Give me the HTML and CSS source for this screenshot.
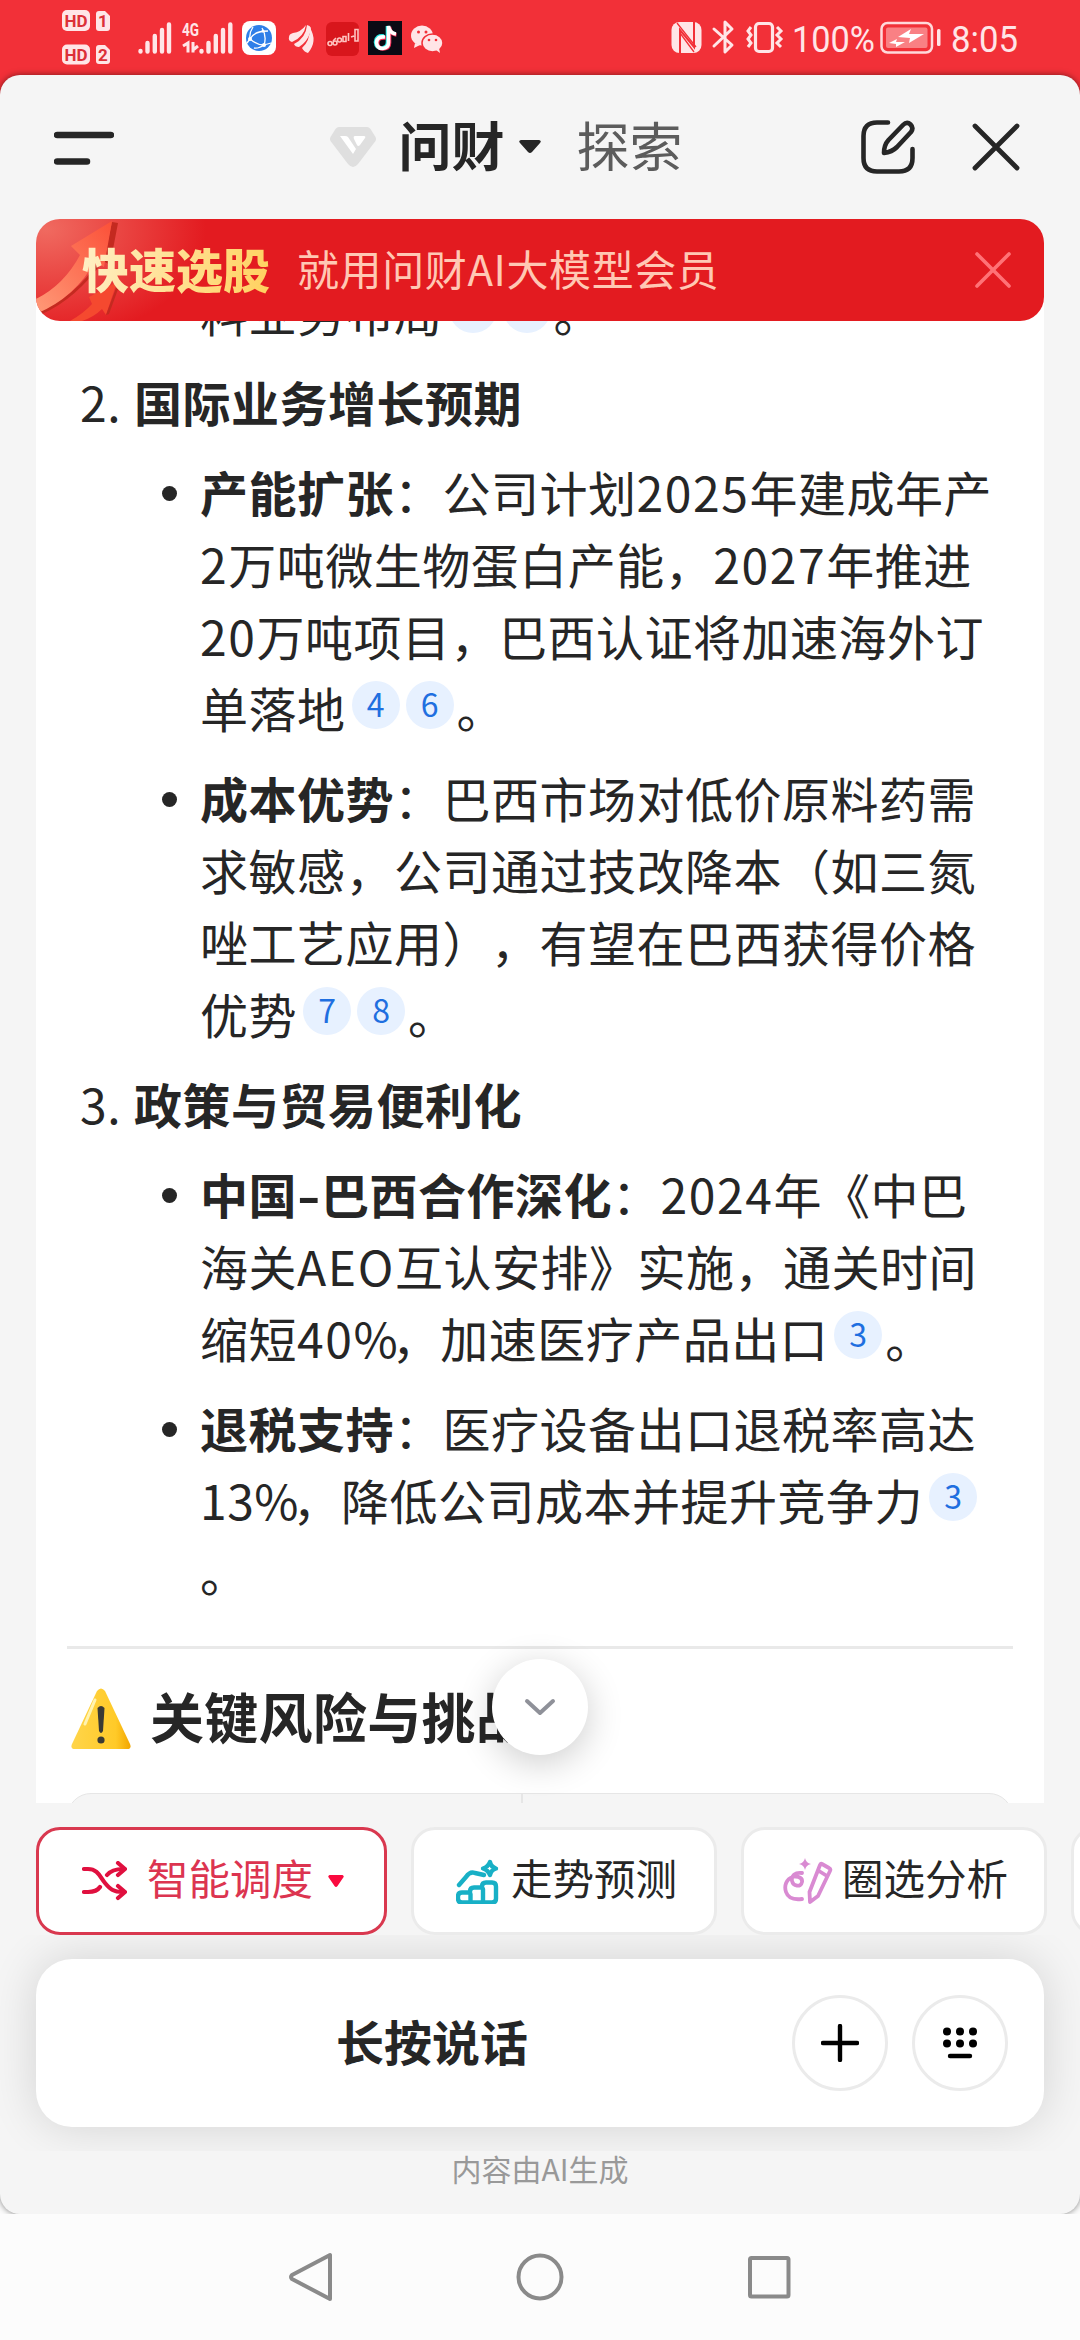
FILE: index.html
```
<!DOCTYPE html>
<html lang="zh-CN">
<head>
  <meta charset="UTF-8">
  <meta name="viewport" content="width=device-width, initial-scale=1.0">
  <title>问财</title>
  <link rel="stylesheet" href="styles.css">
</head>
<body>
  <div class="status-bar">
    <svg class="status-left" width="460" height="75" viewBox="0 0 460 75">
      <!-- HD 1 / HD 2 -->
      <g fill="#ffe5e7">
        <rect x="62" y="10" width="28" height="21" rx="5"/>
        <path d="M99 11h6l5 5v12q0 3-3 3h-8q-3 0-3-3V14q0-3 3-3z"/>
        <rect x="62" y="44.500" width="28" height="20" rx="5"/>
        <path d="M99 45h6l5 5v11q0 3-3 3h-8q-3 0-3-3V48q0-3 3-3z"/>
      </g>
      <g class="hd-text">
        <text x="76" y="27">HD</text><text x="103" y="27">1</text>
        <text x="76" y="61">HD</text><text x="103" y="61">2</text>
      </g>
      <!-- signal -->
      <g stroke="#ffe5e7" stroke-width="4.400" stroke-linecap="round">
        <path d="M140.500 51v.5M147.500 43v8.500M154.800 36v15.500M162 30v21.500M169 24.500v27"/>
        <path d="M201.500 51v.5M208.500 43v8.500M215.800 36v15.500M223 30v21.500M230.300 24.500v27"/>
      </g>
      <text class="net-text" x="182" y="36" textLength="17" lengthAdjust="spacingAndGlyphs">4G</text>
      <path d="M183 46l5-3v9.500M193 42v10.500M193 50l5-4" fill="none" stroke="#ffe5e7" stroke-width="3"/>
      <!-- browser -->
      <rect x="242" y="21" width="34" height="34" rx="8" fill="#fff"/>
      <circle cx="259" cy="38" r="13" fill="#2f7fe8"/>
      <path d="M253 27Q249 33 250 39Q257 45 264 45Q267 36 262 28M250 39Q254 31 268 31M250 39l-3 4M264 45l7-2M264 45q-6 4-10 3" fill="none" stroke="#fff" stroke-width="1.300"/>
      <circle cx="250" cy="39" r="2" fill="#fff"/><circle cx="264" cy="45" r="2" fill="#fff"/><circle cx="263" cy="31" r="1.500" fill="#fff"/>
      <!-- wing -->
      <g fill="#ffe5e7">
        <path d="M289 37q0-3 4-4 8-1 13-8-2 12-14 17-4-1-3-5z"/>
        <path d="M294 44q12-6 13-19 6 1 3 8-3 9-11 14-4 0-5-3z"/>
        <path d="M302 48q8-7 8-20 8 13-2 25-4-1-6-5z"/>
      </g>
      <!-- stock -->
      <rect x="326" y="22" width="33" height="34" rx="6" fill="#d8161c"/>
      <g fill="none" stroke="#ffc4c0" stroke-width="1.600">
        <circle cx="330" cy="43.500" r="2"/><circle cx="335" cy="43" r="2"/><circle cx="339.500" cy="40" r="2"/><path d="M343 36.500h3v5h-3zM348.500 33v8M351 37l3-1M355 29.500h3V41h-3zM333 41l3-3"/>
      </g>
      <!-- tiktok -->
      <rect x="368" y="21" width="34" height="34" fill="#0a0a14"/>
      <g fill="none" stroke-width="3.600">
        <path d="M384 36q-8-1-8.500 6 .5 6 6 6 6-.5 6-6V26q1 7 8 8" stroke="#25e8e4"/>
        <path d="M386 38q-8-1-8.500 5 .5 6 6 6 6-.5 6-6V27q1 7 7 8" stroke="#f5315a"/>
        <path d="M385 37q-8-1-8.500 5.500 .5 6 6 6 6-.5 6-6V26q1 7 7.500 8" stroke="#fff"/>
      </g>
      <!-- wechat -->
      <g fill="#ffe5e7">
        <ellipse cx="422" cy="35.500" rx="11" ry="10"/><path d="M415 43l-1 5 6-3z"/>
        <ellipse cx="432.500" cy="43" rx="10.500" ry="9" stroke="#f23038" stroke-width="1.500"/><path d="M436 50l4 3-1-5z"/>
      </g>
      <g fill="#f23038"><circle cx="418.500" cy="32" r="1.500"/><circle cx="426" cy="32" r="1.500"/><circle cx="429" cy="40" r="1.300"/><circle cx="436" cy="40" r="1.300"/></g>
    </svg>
    <svg class="status-right" width="420" height="75" viewBox="660 0 420 75">
      <!-- nfc -->
      <rect x="671.500" y="22" width="30" height="31" rx="8" fill="#ffe5e7"/>
      <path d="M680 53V30l14 17V22" fill="none" stroke="#f23038" stroke-width="2"/>
      <path d="M677 23l19 24M680 33l14 19" fill="none" stroke="#f23038" stroke-width="1.300"/>
      <!-- bluetooth -->
      <path d="M714 29l18 16-7 7V22l7 7-18 17" fill="none" stroke="#ffe5e7" stroke-width="3" stroke-linejoin="round" stroke-linecap="round"/>
      <!-- vibrate -->
      <rect x="755.500" y="23.500" width="17" height="28" rx="3.500" fill="none" stroke="#ffe5e7" stroke-width="3.200"/>
      <path d="M751 27l-3 4 3 4-3 4 3 4-3 4M777 27l4 4-4 4 4 4-4 4 4 4" fill="none" stroke="#ffe5e7" stroke-width="3"/>
      <text class="status-text" x="792" y="51.500" textLength="83" lengthAdjust="spacingAndGlyphs">100%</text>
      <!-- battery -->
      <rect x="881.500" y="23" width="50.500" height="29.500" rx="6" fill="none" stroke="#ffd9db" stroke-width="2.500"/>
      <rect x="886" y="27.500" width="41.500" height="20.500" rx="2" fill="#f98084"/>
      <path d="M898 37l13-8-2 5h15l-15 9 1-5zM889 43l8-4-1 3h9l-9 5v-3z" fill="#fff"/>
      <rect x="937" y="29" width="3.500" height="17" rx="1.500" fill="#ffe5e7"/>
      <text class="status-text" x="951" y="51.500" textLength="67" lengthAdjust="spacingAndGlyphs">8:05</text>
    </svg>
  </div>

  <div class="app">
    <header class="header">
      <svg class="menu-icon" width="60" height="36" viewBox="0 0 60 36">
        <path d="M3 6h54M3 32.500h30" stroke="#262626" stroke-width="6.500" stroke-linecap="round"/>
      </svg>
      <div class="tabs">
        <svg class="vip-icon" width="48" height="42" viewBox="0 0 48 42">
          <path d="M10 1h28q2 0 3.500 2l5 8q1 2 0 4L29 38q-5 6-10 0L1.500 15q-1-2 0-4l5-8Q8 1 10 1z" fill="#dfdfdf"/>
          <path d="M11 10h5q2 0 3 1l8 12-3 5zM26 10h9q2 0 1 2l-5 7q-2 2-3 0l-3-6q-1-3 1-3z" fill="#fff"/>
        </svg>
        <span class="tab tab-active">问财</span>
        <svg class="tab-caret" width="24" height="14" viewBox="0 0 24 14"><path d="M3 0h18q3 1 1 3l-8 9q-2 2-4 0L2 3Q0 1 3 0z" fill="#262626"/></svg>
        <span class="tab">探索</span>
      </div>
      <div class="header-actions">
        <svg width="54" height="54" viewBox="0 0 54 54" fill="none" stroke="#262626" stroke-width="4.600" stroke-linecap="round" stroke-linejoin="round">
          <path d="M27 2.500H16Q2.500 2.500 2.500 16v22Q2.500 51.500 16 51.500h22Q51.500 51.500 51.500 38V29"/>
          <path d="M23 33q0-8 4.500-13L42 5q4-4 7.500-.5T50 12L36 27q-5 5-13 6z"/>
        </svg>
        <svg width="48" height="48" viewBox="0 0 48 48"><path d="M3 3l42 42M45 3L3 45" stroke="#262626" stroke-width="4.800" stroke-linecap="round"/></svg>
      </div>
    </header>

    <main class="chat">
      <div class="banner">
        <svg class="banner-art" width="200" height="102" viewBox="0 0 200 102">
          <defs>
            <linearGradient id="arrow" x1="0" y1="1" x2="1" y2="0">
              <stop offset="0" stop-color="#ff9a78"/><stop offset="1" stop-color="#fb5038"/>
            </linearGradient>
          </defs>
          <path d="M0 94Q40 78 64 40l10 6 8-42-6-1-8 38Q40 80 6 95z" fill="#c42a20"/>
          <path d="M0 80Q28 66 44 36L35 27 76 2 68 48 59 42Q40 78 0 95z" fill="url(#arrow)"/>
          <path d="M34 102Q48 94 56 85l-3-7 28-15-11 33-4-6q-8 8-20 12z" fill="#f5492f"/>
          <path d="M81 66l-11 30 3-1 12-33z" fill="#c42a20"/>
        </svg>
        <span class="banner-title">快速选股</span>
        <span class="banner-text">就用问财AI大模型会员</span>
        <svg class="banner-close" width="36" height="36" viewBox="0 0 36 36"><path d="M2 2l32 32M34 2L2 34" stroke="#ff7276" stroke-width="3.600" stroke-linecap="round"/></svg>
      </div>

      <article class="answer">
        <p class="line">料业务布局<span class="ref">1</span><span class="ref ref-last">2</span>。</p>

        <div class="point"><span class="num">2.</span><b>国际业务增长预期</b></div>
        <ul class="list">
          <li><b>产能扩张</b>：公司计划<span class="n">2025</span>年建成年产<br><span class="n">2</span>万吨微生物蛋白产能，<span class="n">2027</span>年推进<br><span class="n">20</span>万吨项目，巴西认证将加速海外订<br>单落地<span class="ref">4</span><span class="ref ref-last">6</span>。</li>
          <li><b>成本优势</b>：巴西市场对低价原料药需<br>求敏感，公司通过技改降本（如三氮<br>唑工艺应用），有望在巴西获得价格<br>优势<span class="ref">7</span><span class="ref ref-last">8</span>。</li>
        </ul>

        <div class="point"><span class="num">3.</span><b>政策与贸易便利化</b></div>
        <ul class="list">
          <li><b>中国<span class="dash">-</span>巴西合作深化</b>：<span class="n">2024</span>年《中巴<br>海关<span class="n">AEO</span>互认安排》实施，通关时间<br>缩短<span class="n">40</span><span class="pct">%</span>，加速医疗产品出口<span class="ref ref-last">3</span>。</li>
          <li><b>退税支持</b>：医疗设备出口退税率高达<br>13<span class="pct">%</span>，降低公司成本并提升竞争力<span class="ref">3</span><br>。</li>
        </ul>

        <hr class="divider">

        <h2 class="section-title">
          <svg width="62" height="62" viewBox="0 0 62 62">
            <defs>
              <linearGradient id="warn" x1="0" y1="0" x2="1" y2="0">
                <stop offset="0" stop-color="#ffd54a"/><stop offset=".75" stop-color="#ffca28"/><stop offset="1" stop-color="#f2a600"/>
              </linearGradient>
            </defs>
            <path d="M27 3q4-5 8 0l25 53q2 5-3 5H5q-5 0-3-5z" fill="url(#warn)"/>
            <path d="M27.500 20q3.500-4 7 0L33 43q-2 4-4 0z" fill="#3a3a35"/>
            <circle cx="31" cy="52" r="3.600" fill="#3a3a35"/>
            <path d="M25 12L15 36" stroke="#fff3b0" stroke-width="3" stroke-linecap="round"/>
          </svg>
          <span>关键风险与挑战</span>
        </h2>

        <div class="table-head"><span></span><span></span></div>
      </article>

      <button class="scroll-down">
        <svg width="32" height="18" viewBox="0 0 32 18"><path d="M3 3l13 12L29 3" fill="none" stroke="#8f9199" stroke-width="4" stroke-linecap="round" stroke-linejoin="round"/></svg>
      </button>
    </main>

    <div class="chips">
      <div class="chip chip-active">
        <svg width="45" height="40" viewBox="0 0 45 40" fill="none" stroke="#e0103f" stroke-width="4.200" stroke-linecap="round" stroke-linejoin="round">
          <path d="M2 8h4c10 0 12 8 17 14s8 9 18 9"/>
          <path d="M2 31h4c6 0 10-2 12-5M25 14q5-6 16-6"/>
          <path d="M36 2l7 6-7 6M36 25l7 6-7 6"/>
        </svg>
        <span>智能调度</span>
        <svg class="chip-caret" width="16" height="12" viewBox="0 0 16 12"><path d="M1.500 0h13q2 1 .8 2.600L9.500 11q-1.500 2-3 0L.7 2.600Q-.5 1 1.500 0z" fill="#fa0a3f"/></svg>
      </div>
      <div class="chip">
        <svg width="44" height="46" viewBox="0 0 44 46" fill="none" stroke="#18b0c6" stroke-width="4.400" stroke-linecap="round" stroke-linejoin="round">
          <path d="M36 44.500H6q-4 0-4-4v-2q0-4 4-4h8v-1q0-4 4-4h8v-1q0-4 4-4h6q4 0 4 4v12q0 4-4 4zM14.500 36v8M27 31v13"/>
          <path d="M3 27l7-8q4-6 9-4l9 2"/>
          <path d="M34 4q1 5 6 6.500-5 1.500-6 6.500-2-5-7-6.500 5-1.500 7-6.500z"/>
        </svg>
        <span>走势预测</span>
      </div>
      <div class="chip">
        <svg width="50" height="46" viewBox="0 0 50 46" fill="none" stroke="#d98ad2" stroke-width="3.800" stroke-linecap="round" stroke-linejoin="round">
          <path d="M19 15C12 14 8 18 9 23s9 7 10 1-8-6-9-5C3 21 1 28 3 34s8 8 16 7"/>
          <path d="M39 6l7 4q2 1 1 3L35 38l-8 6-.5-10L37 7q1-2 2-1zM36 13l8 5"/>
          <path d="M22 0q1 5 6 6-5 1-6 6-1-5-6-6 5-1 6-6z" fill="#d98ad2" stroke="none"/>
        </svg>
        <span>圈选分析</span>
      </div>
      <div class="chip"></div>
    </div>

    <div class="composer">
      <div class="composer-bar">
        <span class="talk">长按说话</span>
        <button class="round-btn">
          <svg width="38" height="38" viewBox="0 0 38 38"><path d="M19 2v34M2 19h34" stroke="#000" stroke-width="4.400" stroke-linecap="round"/></svg>
        </button>
        <button class="round-btn">
          <svg width="36" height="32" viewBox="0 0 36 32">
            <circle cx="5" cy="4.500" r="4"/><circle cx="18" cy="4.500" r="4"/><circle cx="31" cy="4.500" r="4"/>
            <circle cx="5" cy="16.500" r="4"/><circle cx="18" cy="16.500" r="4"/><circle cx="31" cy="16.500" r="4"/>
            <path d="M8 29h20" stroke="#000" stroke-width="4.400" stroke-linecap="round"/>
          </svg>
        </button>
      </div>
    </div>
    <footer class="notice">内容由AI生成</footer>
  </div>

  <nav class="nav-bar">
    <svg width="48" height="50" viewBox="0 0 48 50"><path d="M43 3v44L5 27q-2-2 0-4z" fill="none" stroke="#8a8a8a" stroke-width="4" stroke-linejoin="round"/></svg>
    <svg width="48" height="50" viewBox="0 0 48 50"><circle cx="24" cy="25" r="21.500" fill="none" stroke="#8a8a8a" stroke-width="4"/></svg>
    <svg width="48" height="50" viewBox="0 0 48 50"><rect x="5" y="6" width="38.500" height="38.500" rx="1.500" fill="none" stroke="#8a8a8a" stroke-width="4"/></svg>
  </nav>
</body>
</html>
```
FILE: styles.css
```
* {
  margin: 0;
  padding: 0;
  box-sizing: border-box;
}

body {
  width: 1080px;
  height: 2340px;
  overflow: hidden;
  background: #fcfcfc;
  color: #262626;
  font-family: "Noto Sans CJK SC", sans-serif;
  text-spacing-trim: space-all;
  white-space: nowrap;
}

svg {
  display: block;
  flex-shrink: 0;
}

button {
  border: none;
  background: #fff;
  display: flex;
  align-items: center;
  justify-content: center;
}

/* status bar */
.status-bar {
  height: 99px;
  margin-bottom: -24px;
  background: #f23038;
  display: flex;
  justify-content: space-between;
}

.hd-text {
  font: bold 17px Roboto, sans-serif;
  fill: #dc3038;
  text-anchor: middle;
}

.net-text {
  font: bold 19px Roboto, sans-serif;
  fill: #ffe5e7;
}

.status-text {
  font: 36px Roboto, sans-serif;
  fill: #ffe5e7;
}

/* app panel */
.app {
  position: relative;
  height: 2139px;
  background: #f5f5f5;
  border-radius: 20px;
  box-shadow: 0 0 6px rgba(0, 0, 0, 0.5);
}

.header {
  height: 144px;
  padding: 0 60px 0 54px;
  display: flex;
  align-items: center;
  justify-content: space-between;
}

.tabs {
  display: flex;
  align-items: center;
  margin-left: 36px;
}

.tab {
  font-size: 53px;
  line-height: 80px;
  color: #5c5c5c;
  margin-top: -6px;
}

.tab-active {
  font-weight: 600;
  color: #262626;
  margin-left: 22px;
}

.tab-caret {
  margin: 0 35px 0 13px;
}

.header-actions {
  display: flex;
  align-items: center;
  gap: 57px;
}

/* conversation */
.chat {
  position: relative;
  height: 1584px;
  padding: 0 36px;
  overflow: hidden;
}

.banner {
  position: absolute;
  top: 0;
  left: 36px;
  right: 36px;
  z-index: 2;
  height: 102px;
  padding: 0 33px 0 46px;
  display: flex;
  align-items: center;
  overflow: hidden;
  border-radius: 24px;
  background: radial-gradient(ellipse 160px 110px at 10px 10px, #f06a60, #e31b20);
}

.banner-art {
  position: absolute;
  left: 0;
  top: 0;
}

.banner-title {
  position: relative;
  font-size: 47px;
  font-weight: 900;
  line-height: 102px;
  margin-top: -4px;
  background: linear-gradient(100deg, #fff0c8, #ffd05c);
  -webkit-background-clip: text;
  background-clip: text;
  color: transparent;
}

.banner-text {
  font-size: 42px;
  letter-spacing: 0.6px;
  color: #ffc8b4;
  margin: -5px 0 0 27px;
}

.banner-close {
  margin-left: auto;
}

.answer {
  height: 1528px;
  margin-top: 56px;
  padding: 0 31px;
  background: #fff;
  font-size: 48px;
  line-height: 72px;
  letter-spacing: 0.5px;
}

.line {
  padding-left: 133px;
}

.point {
  display: flex;
  margin-top: 18px;
  padding-left: 13px;
}

.num {
  width: 54px;
}

.list {
  list-style: none;
}

.list li {
  position: relative;
  margin-top: 18px;
  padding-left: 133px;
}

.list li::before {
  content: "";
  position: absolute;
  left: 95px;
  top: 31px;
  width: 15px;
  height: 15px;
  border-radius: 50%;
  background: #262626;
}

.n {
  letter-spacing: 1.6px;
}

/* percent sign is narrower than the font's own */
.pct {
  letter-spacing: -6px;
}

.dash {
  display: inline-block;
  width: 24px;
  text-align: center;
  transform: scaleX(1.35);
}

.ref {
  display: inline-block;
  width: 48px;
  height: 48px;
  margin-left: 6px;
  overflow: hidden;
  vertical-align: -1px;
  border-radius: 50%;
  background: #e7f1ff;
  color: #1f6fe0;
  font-size: 32px;
  line-height: 44px;
  letter-spacing: 0;
  text-align: center;
}

.ref-last {
  margin-right: 3px;
}

.divider {
  height: 3px;
  margin-top: 39px;
  border: none;
  background: #e9e9e9;
}

.section-title {
  display: flex;
  align-items: center;
  gap: 18px;
  margin-top: 31px;
  padding-left: 4px;
  font-size: 54px;
  font-weight: 600;
  letter-spacing: 0.3px;
}

.section-title svg {
  margin: 6px 0 0 -1px;
}

.table-head {
  display: flex;
  height: 60px;
  margin-top: 41px;
  border: 1px solid #e6e6e6;
  border-radius: 24px;
  background: #f5f5f5;
}

.table-head span {
  width: 453px;
}

.table-head span + span {
  border-left: 2px solid #e6e6e6;
}

.scroll-down {
  position: absolute;
  left: 492px;
  top: 1440px;
  width: 96px;
  height: 96px;
  border-radius: 50%;
  box-shadow: 0 8px 36px rgba(0, 0, 0, 0.2);
}

/* quick actions */
.chips {
  height: 132px;
  padding: 24px 0 0 36px;
  display: flex;
  gap: 24px;
  overflow: hidden;
}

.chip {
  flex-shrink: 0;
  width: 306px;
  height: 108px;
  padding-left: 42px;
  display: flex;
  align-items: center;
  gap: 11px;
  border: 3px solid #ebebeb;
  border-radius: 24px;
  background: #fff;
  font-size: 41.500px;
  line-height: 60px;
}

.chip span {
  margin-top: -8px;
}

.chip:nth-child(3) {
  padding-left: 39px;
  gap: 9px;
}

.chip-active {
  width: 351px;
  padding-left: 43px;
  gap: 20px;
  border-color: #d9384f;
  color: #dc3450;
}

.chip-caret {
  margin-left: -5px;
}

/* voice input */
.composer {
  height: 216px;
  padding: 24px 36px;
  overflow: hidden;
}

.composer-bar {
  height: 168px;
  padding: 0 36px;
  display: flex;
  align-items: center;
  gap: 24px;
  border-radius: 36px;
  background: #fff;
  box-shadow: 0 0 48px rgba(0, 0, 0, 0.14);
}

.talk {
  width: 696px;
  margin-top: -7px;
  padding-left: 24px;
  text-align: center;
  font-size: 48px;
  font-weight: 600;
}

.round-btn {
  width: 96px;
  height: 96px;
  border: 3px solid #ebebeb;
  border-radius: 50%;
}

.notice {
  text-align: center;
  font-size: 30px;
  line-height: 30px;
  color: #999;
  padding-top: 2px;
}

/* system navigation */
.nav-bar {
  position: relative;
  height: 126px;
  background: #fcfcfc;
  display: flex;
  align-items: center;
  justify-content: center;
  gap: 181px;
}
```
